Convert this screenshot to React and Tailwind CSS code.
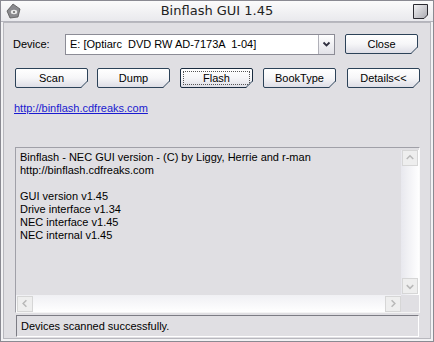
import React from "react";

const F = { fontFamily: '"Liberation Sans", Arial, sans-serif' };

function Btn({ children, className = "", def = false }) {
  return (
    <div
      className={`relative h-[20px] w-[73px] shrink-0 rounded-[2px] border ${def ? "border-[#1a2c40]" : "border-[#2c4258]"} bg-gradient-to-b from-[#ffffff] via-[#f6f6f8] to-[#dedee6] flex items-center justify-center text-[11px] text-black ${className}`}
    >
      {def && (
        <div className="absolute inset-[2px] border border-dotted border-[#555]" />
      )}
      <span className="relative">{children}</span>
      <svg className="absolute right-[-1px] bottom-[-1px]" width="7" height="7" viewBox="0 0 7 7">
        <polygon points="7,0 7,7 0,7" fill="#e0dfe3" />
        <line x1="6.5" y1="0" x2="0" y2="6.5" stroke="#2c4258" strokeWidth="1" />
      </svg>
    </div>
  );
}

function ArrowBox({ dir, className = "" }) {
  const paths = {
    up: "M4 8 L7.5 4.5 L11 8",
    down: "M4 6 L7.5 9.5 L11 6",
    left: "M9 4 L5.5 7.5 L9 11",
    right: "M6 4 L9.5 7.5 L6 11",
  };
  return (
    <div className={`w-[16px] h-[16px] border border-[#d6d6d6] bg-[#eeeeee] flex items-center justify-center ${className}`}>
      <svg width="15" height="15" viewBox="0 0 15 15">
        <path d={paths[dir]} stroke="#b8b8b8" strokeWidth="1.6" fill="none" />
      </svg>
    </div>
  );
}

export default function App() {
  return (
    <div
      className="w-[434px] h-[342px] bg-[#e0dfe3] border border-[#8a8a92] flex flex-col overflow-hidden text-black"
      style={F}
    >
      {/* Title bar */}
      <div className="h-[21px] shrink-0 flex items-center bg-gradient-to-b from-[#fbfbfb] to-[#e9e9ed] border-b border-[#b4b4bc] relative">
        <svg className="absolute left-[4px] top-[2px]" width="17" height="17" viewBox="0 0 17 17">
          <polygon points="8,1 15,6 13,14 5,15 2,8" fill="#8a8a8e" stroke="#555" strokeWidth="0.8" />
          <ellipse cx="9" cy="9" rx="3.2" ry="2.2" fill="#e8e8e8" />
          <circle cx="9" cy="9" r="1" fill="#666" />
        </svg>
        <div
          className="flex-1 text-center text-[13px] text-[#222]"
          style={{ fontFamily: '"DejaVu Sans", Verdana, sans-serif' }}
        >
          Binflash GUI 1.45
        </div>
        <svg className="absolute right-[5px] top-[3px]" width="15" height="15" viewBox="0 0 15 15">
          <defs>
            <linearGradient id="g1" x1="0" y1="0" x2="1" y2="1">
              <stop offset="0" stopColor="#f4f4f6" />
              <stop offset="1" stopColor="#a8a8b0" />
            </linearGradient>
          </defs>
          <path d="M0.5 0.5 H14.5 V11 L11 14.5 H0.5 Z" fill="url(#g1)" stroke="#2a2a30" strokeWidth="1" />
        </svg>
      </div>

      {/* Body frame */}
      <div className="flex-1 border-l-2 border-r-2 border-b-2 border-[#f2f2f4] flex flex-col">
        <div className="flex-1 border border-[#b8b8be] flex flex-col pl-[9px] pr-[11px]">
          {/* Row 1 */}
          <div className="mt-[11px] h-[20px] flex items-center text-[11px]">
            <span className="w-[52px]">Device:</span>
            <div className="w-[270px] h-[21px] border border-[#8c8c96] bg-white flex items-center">
              <span className="flex-1 pl-[4px] whitespace-pre">E: [Optiarc  DVD RW AD-7173A  1-04]</span>
              <div className="w-[16px] h-[19px] border-l border-[#b0b0b8] bg-gradient-to-b from-[#ffffff] to-[#e2e2e8] flex items-center justify-center">
                <svg width="9" height="7" viewBox="0 0 9 7">
                  <path d="M1.5 1.5 L4.5 4.5 L7.5 1.5" stroke="#303040" strokeWidth="1.8" fill="none" />
                </svg>
              </div>
            </div>
            <Btn className="ml-[10px] w-[72px]">Close</Btn>
          </div>

          {/* Row 2 */}
          <div className="mt-[14px] flex items-center">
            <Btn className="ml-[2px]">Scan</Btn>
            <Btn className="ml-[9px]">Dump</Btn>
            <Btn className="ml-[10px] w-[72px]" def>Flash</Btn>
            <Btn className="ml-[10px] w-[72px]">BookType</Btn>
            <Btn className="ml-[11px] w-[72px]">Details&lt;&lt;</Btn>
          </div>

          {/* Link */}
          <div className="mt-[12px] h-[16px] flex items-center pl-[1px] text-[11px]">
            <span className="text-[#1a1ad0] underline">http://binflash.cdfreaks.com</span>
          </div>

          {/* Text area */}
          <div className="mt-[31px] ml-[2px] w-[405px] h-[166px] shrink-0 border-t border-l border-[#a0a0a8] border-r border-r-[#fafafa] border-b border-b-[#f4f4f4] flex flex-col">
            <div className="flex flex-1 min-h-0">
              <div className="flex-1 pl-[4px] pt-[3px] text-[11px] leading-[13px]">
                <div>Binflash - NEC GUI version - (C) by Liggy, Herrie and r-man</div>
                <div>http://binflash.cdfreaks.com</div>
                <div>&nbsp;</div>
                <div>GUI version v1.45</div>
                <div>Drive interface v1.34</div>
                <div>NEC interface v1.45</div>
                <div>NEC internal v1.45</div>
              </div>
              <div className="w-[18px] mt-[2px] flex flex-col items-center bg-gradient-to-r from-[#e8e8ee] to-[#ffffff]">
                <ArrowBox dir="up" />
                <div className="flex-1" />
                <ArrowBox dir="down" className="mb-[1px]" />
              </div>
            </div>
            <div className="flex h-[17px] shrink-0">
              <div className="flex-1 flex items-center bg-gradient-to-b from-[#f0f0f4] to-[#ffffff]">
                <ArrowBox dir="left" className="ml-[1px]" />
                <div className="flex-1" />
                <ArrowBox dir="right" />
              </div>
              <div className="w-[18px]" />
            </div>
          </div>

          {/* Status */}
          <div className="mt-[2px] ml-[3px] w-[403px] h-[22px] shrink-0 border-t border-l border-[#7c7c84] border-r border-r-[#ffffff] border-b border-b-[#ffffff] flex items-center pl-[4px] text-[11px]">
            Devices scanned successfully.
          </div>
        </div>
      </div>
    </div>
  );
}
